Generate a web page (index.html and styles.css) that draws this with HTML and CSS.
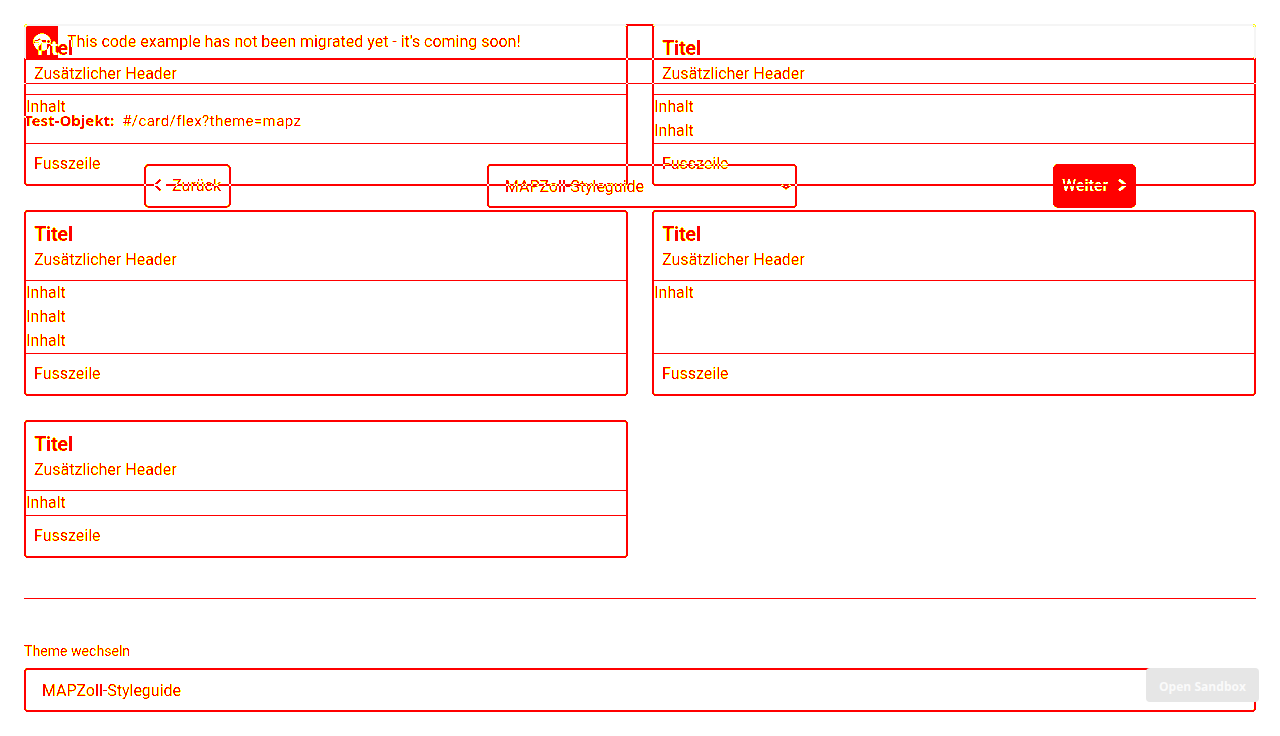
FILE: index.html
```html
<!DOCTYPE html>
<html lang="de">
<head>
<meta charset="utf-8">
<title>Card flex</title>
<link rel="stylesheet" href="styles.css">
</head>
<body>
<svg class="defs" width="0" height="0" aria-hidden="true">
  <!-- Overlap map: black is transparent, partial coverage yellow, full coverage red -->
  <filter id="overlap" x="0" y="0" width="100%" height="100%" color-interpolation-filters="sRGB">
    <feColorMatrix type="matrix" values="0 0 0 0 1  1 0 0 0 0  0 0 0 0 0  1 0 0 0 0"/>
    <feComponentTransfer>
      <feFuncG type="discrete" tableValues="1 1 1 1 1 1 1 1 1 1 1 1 1 1 0 0 0 0 0 0"/>
      <feFuncA type="discrete" tableValues="0 0 0 0 0 0 1 1 1 1 1 1 1 1 1 1 1 1 1 1"/>
    </feComponentTransfer>
  </filter>
</svg>
<div class="stage">
  <div class="shared"><div class="shared-outline"></div></div>
  <div class="overlay">
    <main class="layer cards-layer">
      <div class="cards">
        <section class="card"><header><h2>Titel</h2><p>Zusätzlicher Header</p></header><div class="content"><p>Inhalt</p></div><footer>Fusszeile</footer></section>
        <section class="card"><header><h2>Titel</h2><p>Zusätzlicher Header</p></header><div class="content"><p>Inhalt</p><p>Inhalt</p></div><footer>Fusszeile</footer></section>
        <section class="card"><header><h2>Titel</h2><p>Zusätzlicher Header</p></header><div class="content"><p>Inhalt</p><p>Inhalt</p><p>Inhalt</p></div><footer>Fusszeile</footer></section>
        <section class="card"><header><h2>Titel</h2><p>Zusätzlicher Header</p></header><div class="content"><p>Inhalt</p></div><footer>Fusszeile</footer></section>
        <section class="card"><header><h2>Titel</h2><p>Zusätzlicher Header</p></header><div class="content"><p>Inhalt</p></div><footer>Fusszeile</footer></section>
      </div>
      <hr class="rule theme-rule">
      <div class="label">Theme wechseln</div>
      <div class="select wide">MAPZoll-Styleguide</div>
    </main>
    <div class="layer nav-layer">
      <div class="alert diff">
        <span class="alert-icon"><svg width="32" height="32" viewBox="0 0 32 32"><circle cx="16" cy="16" r="8.700" fill="#000"/><path d="M8 16h7M12.500 13l3 3-3 3" fill="none" stroke="#fff" stroke-width="1.800"/></svg></span>
        <span class="alert-text">This code example has not been migrated yet - it's coming soon!</span>
      </div>
      <hr class="rule nav-rule diff">
      <div class="object diff"><b>Test-Objekt:</b><span>#/card/flex?theme=mapz</span></div>
      <div class="nav">
        <div class="button diff"><svg width="16" height="16" viewBox="0 0 16 16"><path d="M3 7h10M7.500 1.500L2 7l5.500 5.500" fill="none" stroke="#fff" stroke-width="2"/></svg><span>Zurück</span></div>
        <div class="select narrow diff"><span>MAPZoll-Styleguide</span><svg width="10" height="6" viewBox="0 0 10 6"><path d="M.5 1L5 4.500 9.500 1" fill="none" stroke="#fff" stroke-width="2"/></svg></div>
        <div class="button primary"><span>Weiter</span><svg width="17" height="16" viewBox="0 0 17 16"><path d="M0 7h14" stroke="#000" stroke-width="2"/><path d="M8 1.500L14.500 7 8 12.500" fill="none" stroke="#000" stroke-width="2.800"/></svg></div>
      </div>
    </div>
  </div>
  <div class="floating"><span class="sandbox">Open Sandbox</span></div>
</div>
</body>
</html>
```
FILE: styles.css
```css
* { box-sizing: border-box; }
body { margin: 0; background: #fff; font: 16px/24px Roboto, sans-serif; overflow: hidden; }
h2, p, hr { margin: 0; }
svg { display: block; flex: none; }
.defs { position: absolute; }
.stage { display: grid; width: 1280px; height: 736px; }
.stage > * { grid-area: 1 / 1; min-width: 0; }
.shared { padding: 24px; }
.shared-outline { height: 34px; border: 2px solid #f5f5f5; border-bottom: 0; border-radius: 4px 4px 0 0; }
.overlay { display: grid; background: #000; color: #fff; isolation: isolate; filter: url(#overlap); }
.layer { grid-area: 1 / 1; padding: 24px; min-width: 0; }
.diff { mix-blend-mode: difference; }
.cards { display: grid; grid-template-columns: 1fr 1fr; gap: 24px; }
.card { display: flex; flex-direction: column; border: 2px solid #fff; border-radius: 4px; }
.card header { padding: 8px; border-bottom: 1px solid #fff; }
.card h2 { font-size: 20px; line-height: 28px; font-weight: 700; letter-spacing: -.4px; }
.card .content { flex: 1; }
.card footer { padding: 8px; border-top: 1px solid #fff; }
.rule { border: 0; height: 1px; background: #fff; }
.theme-rule { margin-top: 40px; }
.label { margin-top: 42px; font-size: 14px; line-height: 20px; letter-spacing: .05px; }
.select { display: flex; align-items: center; justify-content: space-between; height: 44px; border: 2px solid #fff; border-radius: 4px; padding: 2px 16px 0; }
.wide { margin-top: 7px; }
.narrow { width: 310px; padding: 2px 4px 0 16px; }
.alert { display: flex; height: 36px; border: 2px solid #fff; border-radius: 4px; }
.alert-icon { width: 32px; height: 32px; background: #fff; }
.alert-text { margin-left: 9px; line-height: 31px; letter-spacing: -.02px; }
.nav-rule { margin-top: 23px; }
.object { display: flex; gap: 8px; margin-top: 25px; font-size: 15px; line-height: 23px; height: 24px; }
.object b { font-family: "Noto Sans", sans-serif; }
.object span { letter-spacing: .42px; line-height: 25px; }
.nav { display: flex; justify-content: space-between; margin-top: 31px; padding: 0 120px; }
.button { display: flex; align-items: center; gap: 3px; height: 44px; border: 2px solid #fff; border-radius: 5px; padding: 0 7px; line-height: 40px; width: 87px; }
.primary { width: 83px; background: #fff; color: #000; mix-blend-mode: lighten; font-weight: 500; }
.floating { display: flex; align-items: flex-end; justify-content: flex-end; padding: 0 21px 34px 0; z-index: 1; }
.sandbox { width: 113px; height: 34px; border-radius: 4px; background: #e6e6e6; color: #fafafa; text-align: center; font: 700 12px/37px "Open Sans", sans-serif; letter-spacing: .05px; white-space: nowrap; }
```
